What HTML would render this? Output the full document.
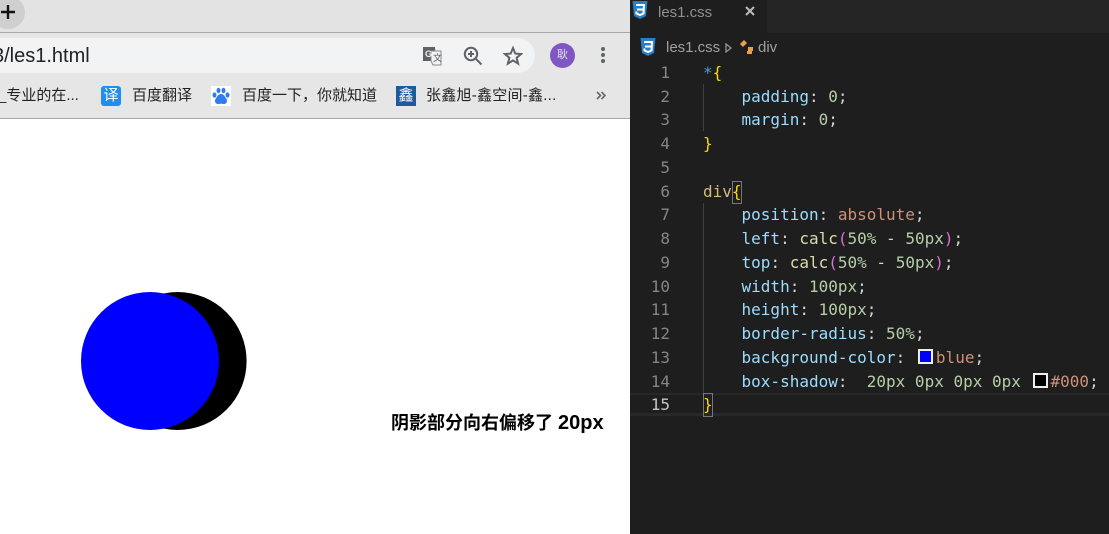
<!DOCTYPE html>
<html><head><meta charset="utf-8"><style>
*{margin:0;padding:0;box-sizing:border-box}
html,body{width:1109px;height:534px;overflow:hidden;background:#fff}
body{position:relative;font-family:"Liberation Sans","Noto Sans CJK SC",sans-serif}
.a{position:absolute;white-space:nowrap}
.bm{font-size:15px;color:#222;top:87px;line-height:18px}
.ln{position:absolute;left:630px;width:40px;text-align:right;font:16px/24px "DejaVu Sans Mono",monospace;color:#858585}
.cd{position:absolute;left:703px;font:16px/24px "DejaVu Sans Mono",monospace;color:#d4d4d4;white-space:pre}
.p{color:#9cdcfe}.n{color:#b5cea8}.s{color:#ce9178}.y{color:#ffd700}.m{color:#da70d6}.t{color:#d7ba7d}
.sw{display:inline-block;width:15px;height:15px;border:2px solid #eee;vertical-align:-1px}
</style></head><body>
<div class="a" style="left:0;top:0;width:630px;height:32px;background:#e3e3e3"></div>
<div class="a" style="left:-9px;top:-4px;width:34px;height:33px;border-radius:50%;background:#cfcfcf"></div>
<svg class="a" style="left:0;top:3px" width="16" height="18"><path d="M1 9H15M8 2V16" stroke="#111" stroke-width="2.4"/></svg>
<div class="a" style="left:0;top:32px;width:630px;height:1px;background:#a8a8a8"></div>
<div class="a" style="left:0;top:33px;width:630px;height:85px;background:#e6e6e6"></div>
<div class="a" style="left:0;top:38px;width:535px;height:35px;border-radius:0 18px 18px 0;background:#f1f3f4"></div>
<div class="a" style="left:-7px;top:45px;font-size:20px;line-height:22px;color:#222">3/les1.html</div>
<svg class="a" style="left:421px;top:45px" width="22" height="21"><path d="M2 2H14L15 16H2Z" fill="#5f6368"/><path d="M10 6H20V20H12L10 16Z" fill="#f1f3f4" stroke="#8a8a8a"/><text x="4" y="12" font-size="9" font-weight="bold" fill="#eee" font-family="Liberation Sans">G</text><text x="12" y="16" font-size="9" fill="#555" font-family="Noto Sans CJK SC">文</text></svg>
<svg class="a" style="left:463px;top:46px" width="20" height="20" fill="none" stroke="#5f6368" stroke-width="2"><circle cx="8" cy="8" r="6.2"/><path d="M13 13L18.5 18.5M5 8H11M8 5V11"/></svg>
<svg class="a" style="left:503px;top:46px" width="20" height="20" fill="none" stroke="#5f6368" stroke-width="2"><path d="M10 2L12.3 7.6L18.2 8L13.6 11.8L15.1 17.6L10 14.4L4.9 17.6L6.4 11.8L1.8 8L7.7 7.6Z"/></svg>
<div class="a" style="left:550px;top:43px;width:25px;height:25px;border-radius:50%;background:#7e57c2;color:#e8dff5;font-size:11px;line-height:25px;text-align:center">耿</div>
<div class="a" style="left:601px;top:47px;width:4px;height:4px;border-radius:50%;background:#5f6368;box-shadow:0 6px 0 #5f6368,0 12px 0 #5f6368"></div>
<div class="a bm" style="left:-2px">_专业的在...</div>
<div class="a" style="left:101px;top:86px;width:20px;height:20px;border-radius:3px;background:#1e8ef0;color:#fff;font-size:15px;line-height:20px;text-align:center">译</div>
<div class="a bm" style="left:132px">百度翻译</div>
<svg class="a" style="left:211px;top:86px" width="20" height="20"><rect width="20" height="20" fill="#fff"/><g fill="#2f7cf0"><ellipse cx="3.5" cy="9" rx="2" ry="2.6"/><ellipse cx="7.5" cy="4.5" rx="2" ry="2.7"/><ellipse cx="12.5" cy="4.5" rx="2" ry="2.7"/><ellipse cx="16.5" cy="9" rx="2" ry="2.6"/><path d="M10 8C7 8 6 11 4.5 13C3 16 5 18.5 8 18C9.500 17.700 10.500 17.700 12 18C15 18.500 17 16 15.500 13C14 11 13 8 10 8Z"/></g></svg>
<div class="a bm" style="left:242px">百度一下，你就知道</div>
<div class="a" style="left:396px;top:86px;width:20px;height:20px;background:#1f5aa0;color:#fff;font-size:15px;line-height:20px;text-align:center">鑫</div>
<div class="a bm" style="left:426px;letter-spacing:.25px">张鑫旭-鑫空间-鑫...</div>
<svg class="a" style="left:596px;top:90px" width="11" height="11" fill="none" stroke="#666" stroke-width="1.6"><path d="M1 2L4.500 5.500L1 9M5.500 2L9 5.500L5.500 9"/></svg>
<div class="a" style="left:0;top:118px;width:630px;height:1px;background:#a8a8a8"></div>
<div class="a" style="left:81px;top:292px;width:138px;height:138px;border-radius:50%;background:#00f;box-shadow:27.600px 0 0 0 #000"></div>
<div class="a" style="left:391px;top:411px;font-size:18px;font-weight:bold;line-height:24px;color:#000">阴影部分向右偏移了 <span style="font-size:20px">20px</span></div>

<div class="a" style="left:630px;top:0;width:479px;height:534px;background:#1e1e1e"></div>
<div class="a" style="left:767px;top:0;width:342px;height:33px;background:#252526"></div>
<svg class="a" style="left:632px;top:1px" width="16" height="18"><path d="M0.500 0H15.500L14 15L8 18L2 15Z" fill="#2a7fc4"/><path d="M4 4H12L11.500 12.500L8 14L4.500 12.500L4.300 10.500M5 8.500H11.500" fill="none" stroke="#fff" stroke-width="2"/></svg>
<div class="a" style="left:658px;top:3px;font-size:15px;line-height:20px;color:#8f8f8f">les1.css</div>
<svg class="a" style="left:745px;top:6px" width="10" height="10" stroke="#bbb" stroke-width="2"><path d="M1 1L9 9M9 1L1 9"/></svg>
<svg class="a" style="left:640px;top:38px" width="16" height="18"><path d="M0.500 0H15.500L14 15L8 18L2 15Z" fill="#2a7fc4"/><path d="M4 4H12L11.500 12.500L8 14L4.500 12.500L4.300 10.500M5 8.500H11.500" fill="none" stroke="#fff" stroke-width="2"/></svg>
<div class="a" style="left:666px;top:38px;font-size:15px;line-height:20px;color:#a0a0a0">les1.css</div>
<svg class="a" style="left:725px;top:43px" width="7" height="10"><path d="M1 1L6 5L1 9Z" fill="none" stroke="#999" stroke-width="1.200"/></svg>
<svg class="a" style="left:739px;top:39px" width="17" height="16"><path d="M1 5L5 1L8 4L4 8ZM9 8H14V12H9ZM8 12H13V15H8Z" fill="#e8a04c"/></svg>
<div class="a" style="left:758px;top:38px;font-size:15px;line-height:20px;color:#a0a0a0">div</div>

<div class="a" style="left:703px;top:84px;width:1px;height:47px;background:#404040"></div>
<div class="a" style="left:703px;top:203px;width:1px;height:190px;background:#404040"></div>
<div class="a" style="left:630px;top:393px;width:479px;height:23px;border-top:2px solid #282828;border-bottom:3px solid #282828"></div>
<div class="a" style="left:703px;top:393px;width:10px;height:24px;border:1px solid #777"></div>
<div class="a" style="left:732px;top:181px;width:10px;height:23px;border:1px solid #777"></div>

<div class="ln" style="top:61px">1</div>
<div class="ln" style="top:85px">2</div>
<div class="ln" style="top:108px">3</div>
<div class="ln" style="top:132px">4</div>
<div class="ln" style="top:156px">5</div>
<div class="ln" style="top:180px">6</div>
<div class="ln" style="top:203px">7</div>
<div class="ln" style="top:227px">8</div>
<div class="ln" style="top:251px">9</div>
<div class="ln" style="top:275px">10</div>
<div class="ln" style="top:298px">11</div>
<div class="ln" style="top:322px">12</div>
<div class="ln" style="top:346px">13</div>
<div class="ln" style="top:370px">14</div>
<div class="ln" style="top:393px;color:#c6c6c6">15</div>

<div class="cd" style="top:61px"><span style="color:#4a9de0">*</span><span class="y">{</span></div>
<div class="cd" style="top:85px">    <span class="p">padding</span>: <span class="n">0</span>;</div>
<div class="cd" style="top:108px">    <span class="p">margin</span>: <span class="n">0</span>;</div>
<div class="cd" style="top:132px"><span class="y">}</span></div>
<div class="cd" style="top:180px"><span class="t">div</span><span class="y">{</span></div>
<div class="cd" style="top:203px">    <span class="p">position</span>: <span class="s">absolute</span>;</div>
<div class="cd" style="top:227px">    <span class="p">left</span>: <span style="color:#dcdcaa">calc</span><span class="m">(</span><span class="n">50%</span> - <span class="n">50px</span><span class="m">)</span>;</div>
<div class="cd" style="top:251px">    <span class="p">top</span>: <span style="color:#dcdcaa">calc</span><span class="m">(</span><span class="n">50%</span> - <span class="n">50px</span><span class="m">)</span>;</div>
<div class="cd" style="top:275px">    <span class="p">width</span>: <span class="n">100px</span>;</div>
<div class="cd" style="top:298px">    <span class="p">height</span>: <span class="n">100px</span>;</div>
<div class="cd" style="top:322px">    <span class="p">border-radius</span>: <span class="n">50%</span>;</div>
<div class="cd" style="top:346px">    <span class="p">background-color</span>: <span class="sw" style="background:#00f;margin:0 3px 0 3px"></span><span class="s">blue</span>;</div>
<div class="cd" style="top:370px">    <span class="p">box-shadow</span>:  <span class="n">20px 0px 0px 0px</span> <span class="sw" style="background:#000;margin:0 3px 0 2px"></span><span class="s">#000</span>;</div>
<div class="cd" style="top:393px"><span class="y">}</span></div>
</body></html>
